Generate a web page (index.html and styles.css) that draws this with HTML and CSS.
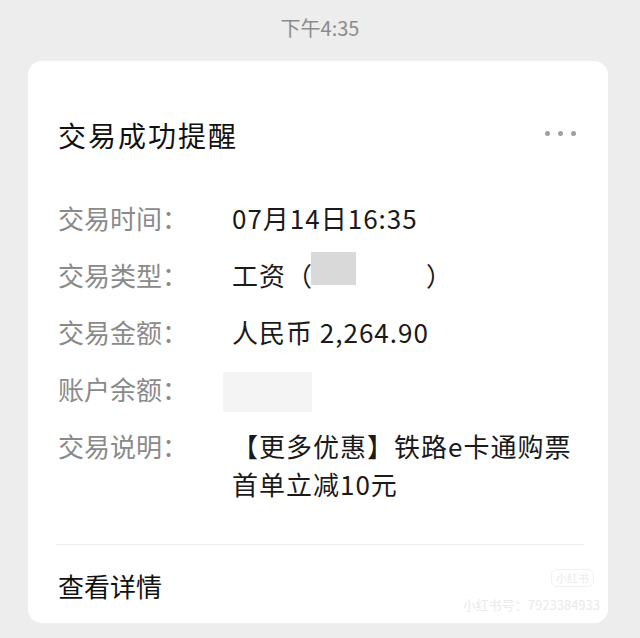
FILE: index.html
```html
<!DOCTYPE html>
<html lang="zh-CN">
<head>
    <meta charset="UTF-8">
    <meta name="viewport" content="width=device-width, initial-scale=1.0">
    <title>交易成功提醒</title>
    <link rel="stylesheet" href="styles.css">
</head>
<body>
    <div class="msg-time">下午4:35</div>
    <div class="card">
        <div class="card-head">
            <h1>交易成功提醒</h1>
            <div class="more">
                <span></span><span></span><span></span>
            </div>
        </div>
        <div class="rows">
            <div class="label">交易时间：</div>
            <div class="value">07月14日16:35</div>

            <div class="label">交易类型：</div>
            <div class="value">工资（<span class="hidden-name"><span class="blur dark"></span></span>）</div>

            <div class="label">交易金额：</div>
            <div class="value">人民币 2,264.90</div>

            <div class="label">账户余额：</div>
            <div class="value"><div class="blur light"></div></div>

            <div class="label">交易说明：</div>
            <div class="value">【更多优惠】铁路e卡通购票<br>首单立减10元</div>
        </div>
        <div class="divider"></div>
        <div class="detail">查看详情</div>
        <div class="watermark">
            <span class="wm-logo">小红书</span>
            <span class="wm-id">小红书号：7923384933</span>
        </div>
    </div>
</body>
</html>
```

FILE: styles.css
```css
body {
    margin: 0;
    background-color: #ededed;
    font-family: "Noto Sans CJK SC", "Noto Sans", sans-serif;
    color: #111;
}
.msg-time {
    padding-top: 18px;
    height: 20px;
    line-height: 20px;
    font-size: 20px;
    color: #8c8c8c;
    text-align: center;
    margin-bottom: 23px;
}
.card {
    position: relative;
    margin: 0 32px 0 28px;
    padding: 54px 32px 18px 30px;
    background-color: #fff;
    border-radius: 14px;
}
.card-head {
    display: flex;
    justify-content: space-between;
    align-items: center;
    height: 40px;
}
.card-head h1 {
    margin: 0;
    font-size: 28px;
    font-weight: normal;
    letter-spacing: 2px;
    line-height: 40px;
}
.more {
    display: flex;
    gap: 8px;
    margin-top: -4px;
}
.more span {
    width: 5px;
    height: 5px;
    border-radius: 50%;
    background-color: #a0a0a0;
}
.rows {
    display: grid;
    grid-template-columns: 174px 1fr;
    row-gap: 19px;
    margin-top: 44px;
    font-size: 26px;
    line-height: 38px;
}
.label {
    color: #8a8a8a;
}
.value {
    color: #1a1a1a;
    letter-spacing: 1px;
}
.hidden-name {
    display: inline-block;
    width: 113px;
    height: 38px;
    vertical-align: top;
    position: relative;
}
.blur {
    display: block;
}
.blur.dark {
    position: absolute;
    left: -2px;
    top: -4px;
    width: 45px;
    height: 33px;
    background-color: #d9d9d9;
}
.blur.light {
    width: 89px;
    height: 40px;
    margin: 2px 0 -4px -9px;
    background-color: #f4f4f4;
}
.divider {
    height: 1px;
    background-color: #ececec;
    margin: 41px -8px 0 -2px;
}
.detail {
    margin-top: 22px;
    font-size: 26px;
    line-height: 38px;
}
.watermark {
    position: absolute;
    right: 8px;
    bottom: 10px;
    display: flex;
    flex-direction: column;
    align-items: flex-end;
    color: #eaeaea;
    font-size: 13px;
    line-height: 16px;
}
.wm-logo {
    margin-right: 6px;
    margin-bottom: 10px;
    padding: 0 4px;
    border: 1px solid #f0f0f0;
    border-radius: 6px;
    font-size: 11px;
}
```
